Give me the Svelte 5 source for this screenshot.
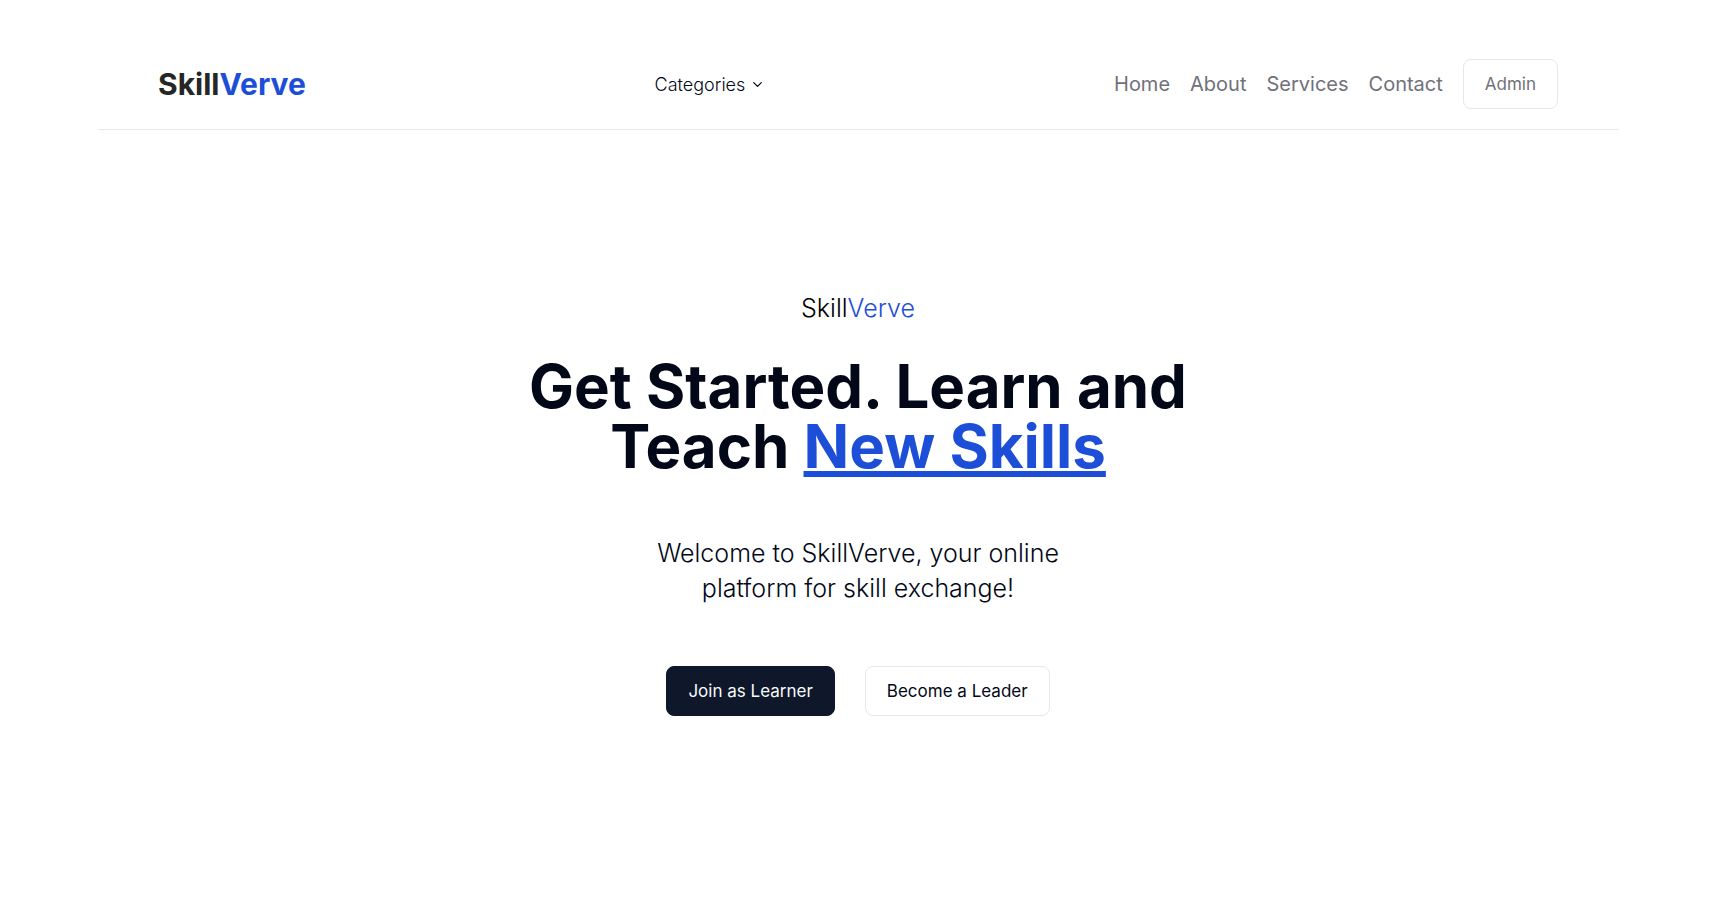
<script>
  const links = ['Home', 'About', 'Services', 'Contact'];
</script>

<div class="page">
  <header>
    <a class="logo" href="#home">Skill<span class="accent">Verve</span></a>
    <button class="categories" type="button">
      Categories
      <svg viewBox="0 0 24 24" width="15" height="15" aria-hidden="true">
        <path d="m6 9 6 6 6-6" />
      </svg>
    </button>
    <nav>
      {#each links as link}
        <a href="#{link.toLowerCase()}">{link}</a>
      {/each}
      <button class="btn" type="button">Admin</button>
    </nav>
  </header>

  <main>
    <p class="eyebrow">Skill<span class="accent">Verve</span></p>
    <h1>Get Started. Learn and Teach <span class="accent underline">New Skills</span></h1>
    <p class="lead">Welcome to SkillVerve, your online platform for skill exchange!</p>
    <div class="actions">
      <button class="btn primary" type="button">Join as Learner</button>
      <button class="btn" type="button">Become a Leader</button>
    </div>
  </main>
</div>

<style>
  :global(body) {
    background: #fff;
  }

  .page {
    box-sizing: border-box;
    padding: 39px 115px 0 98px;
    font-family: Inter, sans-serif;
    color: #020817;
  }

  header {
    display: flex;
    align-items: center;
    justify-content: space-between;
    padding: 20px 60px;
    border-bottom: 1px solid #e2e8f0;
  }

  a {
    color: inherit;
    text-decoration: none;
  }

  button {
    font: inherit;
    color: inherit;
    cursor: pointer;
  }

  .accent {
    color: #1d4ed8;
  }

  .logo {
    color: #262626;
    font-size: 30px;
    line-height: 40px;
    font-weight: 700;
  }

  .categories {
    display: flex;
    align-items: center;
    gap: 5px;
    padding: 10px 20px;
    border: 0;
    background: none;
    font-size: 18px;
    line-height: 25px;
    font-weight: 300;
  }

  svg {
    fill: none;
    stroke: currentColor;
    stroke-width: 2;
    stroke-linecap: round;
    stroke-linejoin: round;
  }

  nav {
    display: flex;
    align-items: center;
    gap: 20px;
    color: #71717a;
    font-size: 20px;
    line-height: 30px;
  }

  .btn {
    box-sizing: border-box;
    height: 50px;
    padding: 0 21px;
    border: 1px solid #e2e8f0;
    border-radius: 8px;
    background: #fff;
    font-size: 17px;
    line-height: 25px;
  }

  .primary {
    border-color: #0f172a;
    background: #0f172a;
    color: #f8fafc;
  }

  main {
    display: flex;
    flex-direction: column;
    align-items: center;
    padding: 161px 0;
    text-align: center;
  }

  p,
  h1 {
    margin: 0;
  }

  .eyebrow {
    color: #000;
    font-size: 25px;
    line-height: 35px;
    font-weight: 300;
  }

  h1 {
    max-width: 720px;
    margin-top: 30px;
    font-size: 60px;
    line-height: 60px;
    font-weight: 700;
  }

  .underline {
    text-decoration: underline;
  }

  .lead {
    max-width: 440px;
    margin-top: 60px;
    font-size: 25px;
    line-height: 35px;
    font-weight: 300;
  }

  .actions {
    display: flex;
    gap: 30px;
    margin-top: 60px;
  }
</style>
